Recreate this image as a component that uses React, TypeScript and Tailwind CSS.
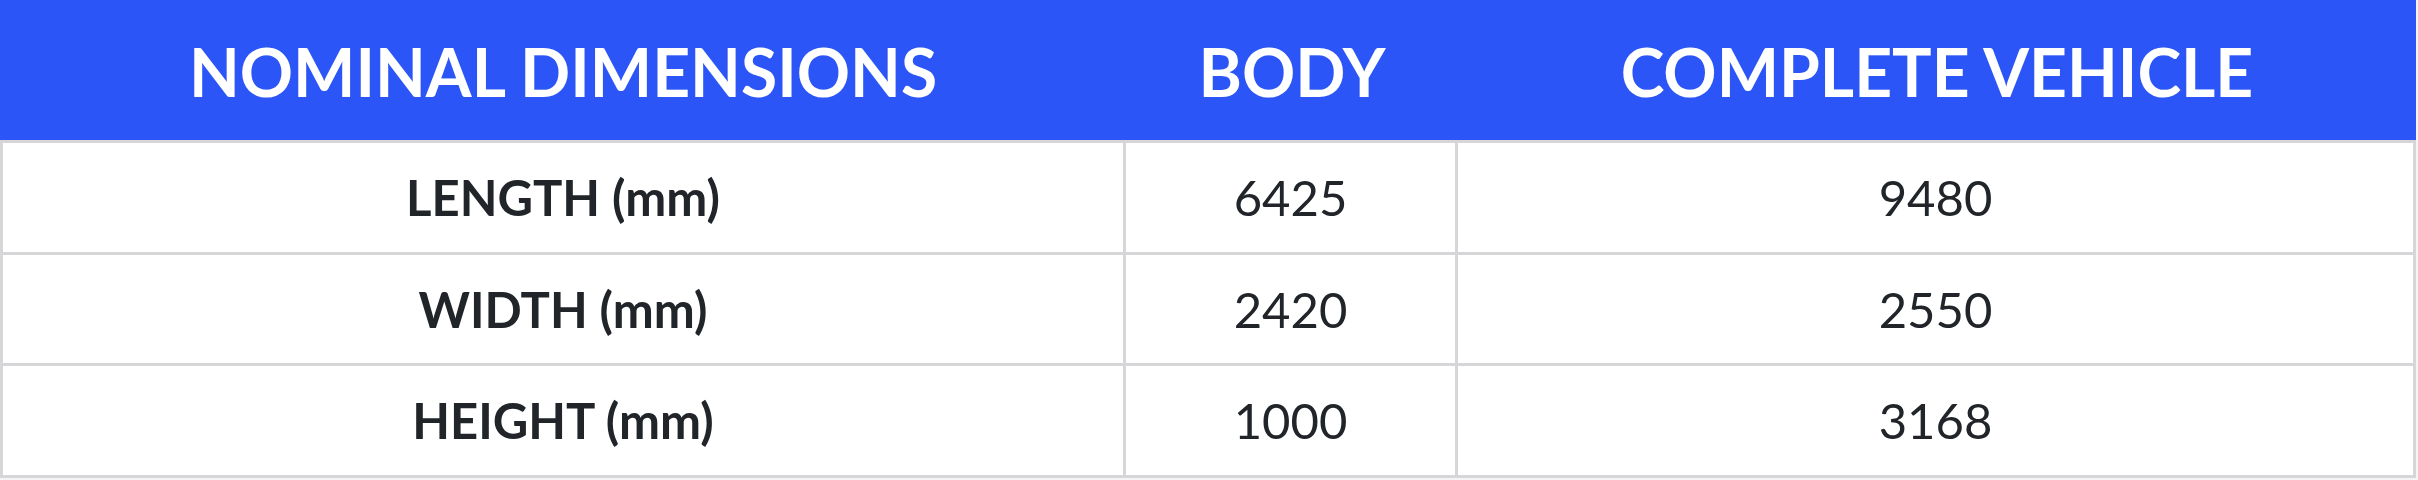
import React from "react";

const rows = [
  { label: "LENGTH (mm)", body: "6425", vehicle: "9480", h: "h-[112px]" },
  { label: "WIDTH (mm)", body: "2420", vehicle: "2550", h: "h-[111px]" },
  { label: "HEIGHT (mm)", body: "1000", vehicle: "3168", h: "h-[112px]" },
];

export default function App() {
  return (
    <div className="w-[2418px] h-[480px] bg-[#f3f4f6] font-['Lato',sans-serif]">
      <div className="w-[2416px]">
        {/* Cabeçalho */}
        <div className="flex h-[140px] pt-[4px] bg-[#2b55f7] text-white font-bold text-[66px] leading-none">
          <div className="w-[1126px] flex items-center justify-center">NOMINAL DIMENSIONS</div>
          <div className="w-[332px] flex items-center justify-center">BODY</div>
          <div className="w-[958px] flex items-center justify-center">COMPLETE VEHICLE</div>
        </div>

        {/* Linhas */}
        <div className="border-t-[3px] border-[#d6d6d8] bg-white text-[#212529] text-[49px] leading-none">
          {rows.map((row) => (
            <div key={row.label} className={`flex ${row.h} border-b-[3px] border-[#d6d6d8]`}>
              <div className="w-[1126px] flex items-center justify-center border-l-[3px] border-r-[3px] border-[#d6d6d8] font-bold">
                {row.label}
              </div>
              <div className="w-[332px] flex items-center justify-center border-r-[3px] border-[#d6d6d8]">
                {row.body}
              </div>
              <div className="w-[958px] flex items-center justify-center border-r-[3px] border-[#d6d6d8]">
                {row.vehicle}
              </div>
            </div>
          ))}
        </div>
      </div>
    </div>
  );
}
